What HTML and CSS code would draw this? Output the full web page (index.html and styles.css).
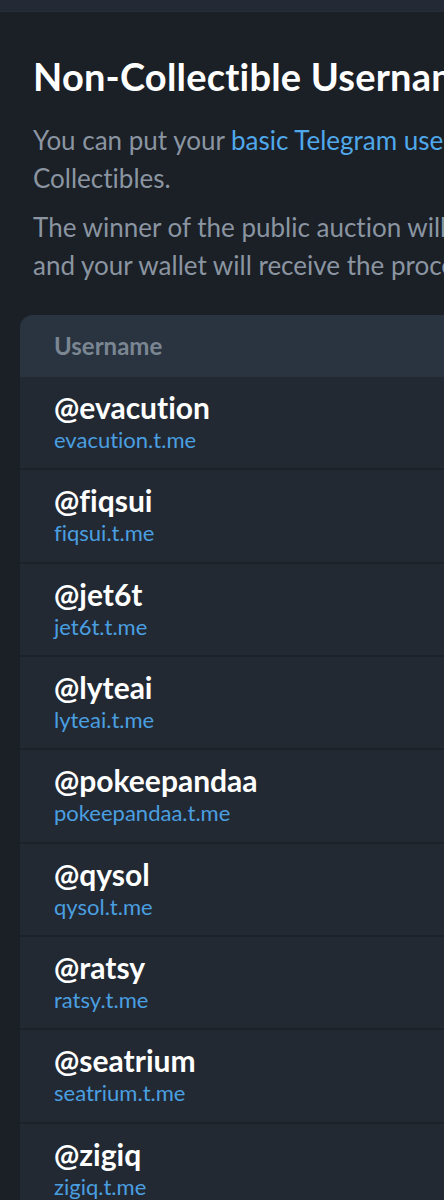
FILE: index.html
```html
<!DOCTYPE html>
<html lang="en">
<head>
    <meta charset="UTF-8">
    <meta name="viewport" content="width=device-width, initial-scale=1.0">
    <title>Fragment - Non-Collectible Usernames</title>
    <link rel="stylesheet" href="styles.css">
</head>
<body>
    <div class="topbar"></div>
    <div class="page">
        <h1>Non-Collectible Usernames</h1>
        <p class="intro">You can put your <a href="#">basic Telegram usernames</a> up for auction on Fragment and turn them into<br>Collectibles.</p>
        <p class="intro">The winner of the public auction will receive the username as a Collectible,<br>and your wallet will receive the proceeds from the sale.</p>

        <div class="table">
            <div class="table-head">Username</div>
            <div class="row"><div class="name">@evacution</div><a class="link" href="#">evacution.t.me</a></div>
            <div class="row"><div class="name">@fiqsui</div><a class="link" href="#">fiqsui.t.me</a></div>
            <div class="row"><div class="name">@jet6t</div><a class="link" href="#">jet6t.t.me</a></div>
            <div class="row"><div class="name">@lyteai</div><a class="link" href="#">lyteai.t.me</a></div>
            <div class="row"><div class="name">@pokeepandaa</div><a class="link" href="#">pokeepandaa.t.me</a></div>
            <div class="row"><div class="name">@qysol</div><a class="link" href="#">qysol.t.me</a></div>
            <div class="row"><div class="name">@ratsy</div><a class="link" href="#">ratsy.t.me</a></div>
            <div class="row"><div class="name">@seatrium</div><a class="link" href="#">seatrium.t.me</a></div>
            <div class="row"><div class="name">@zigiq</div><a class="link" href="#">zigiq.t.me</a></div>
        </div>
    </div>
</body>
</html>
```

FILE: styles.css
```css
html, body {
    overflow: hidden;
}
body {
    margin: 0;
    font-family: 'Lato', 'Liberation Sans', sans-serif;
    font-variant-ligatures: none;
    background: #1b1f26;
    color: #fff;
}
.topbar {
    height: 11px;
    background: #232a35;
    border-bottom: 1px solid #262d38;
}
.page {
    width: 900px;
    padding: 41px 0 0 20px;
}
h1 {
    margin: 0 0 0 13px;
    font-size: 38px;
    line-height: 46px;
    font-weight: 700;
    color: #fff;
    white-space: nowrap;
    letter-spacing: 0.2px;
}
.intro {
    margin: 22px 0 0 13px;
    font-size: 26px;
    line-height: 38px;
    color: #8a95a1;
    white-space: nowrap;
}
.intro + .intro {
    margin-top: 11px;
}
.intro a {
    color: #4fa8ea;
    text-decoration: none;
}
.table {
    margin-top: 31px;
    border-radius: 13px;
    overflow: hidden;
    background: #222933;
}
.table-head {
    height: 62px;
    line-height: 62px;
    padding-left: 34px;
    background: #2a3440;
    font-size: 24px;
    font-weight: 700;
    color: #7b8693;
}
.row {
    height: 79.33px;
    padding: 12px 0 0 34px;
    border-bottom: 2px solid #1d2229;
}
.name {
    font-size: 30px;
    line-height: 36px;
    font-weight: 700;
    color: #fff;
}
.link {
    display: block;
    font-size: 22px;
    line-height: 30px;
    color: #4a9fe0;
    text-decoration: none;
}
```
